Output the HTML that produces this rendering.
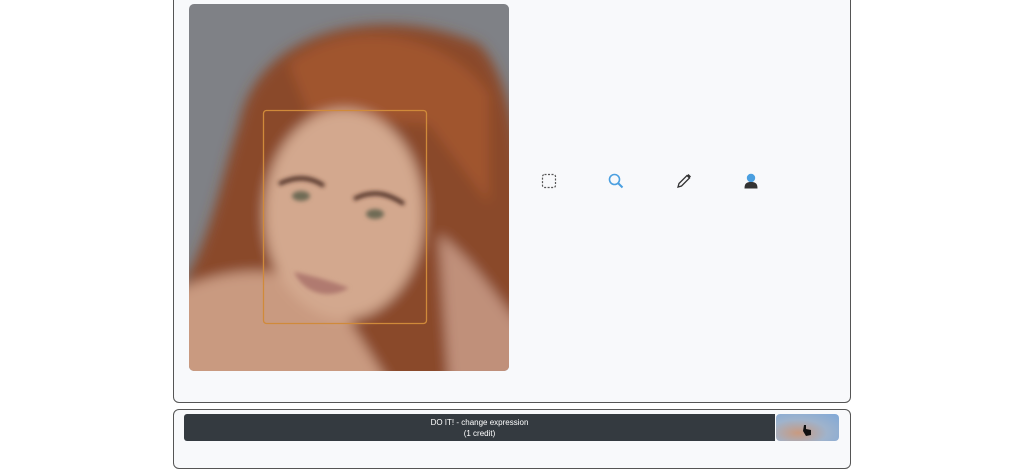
<!DOCTYPE html>
<html><head><style>
html,body{margin:0;padding:0;width:1024px;height:444px;overflow:hidden;background:#fff;font-family:"Liberation Sans",sans-serif}
.p1{position:absolute;left:173px;top:-10px;width:678px;height:413px;border:1.5px solid #555;border-radius:6px;background:#f8f9fb;box-sizing:border-box}
.p2{position:absolute;left:173px;top:409px;width:678px;height:60px;border:1.5px solid #555;border-radius:6px;background:#f8f9fb;box-sizing:border-box}
.btn{position:absolute;left:184px;top:414px;width:591px;height:27px;background:#343a40;color:#fff;font-size:8px;text-align:center;line-height:11px;padding-top:3px;box-sizing:border-box;border-radius:3px 0 0 3px}
.blob{position:absolute;left:776px;top:414px;width:63px;height:27px;border-radius:4px;background:radial-gradient(ellipse at 35% 70%,#c99a80 0%,#9fb3cc 50%,#7fa8d8 100%)}
.photo{position:absolute;left:189px;top:4px;width:320px;height:367px;border-radius:5px;overflow:hidden}
.ic{position:absolute;top:173px}
</style></head><body>
<div class="p1"></div>
<div class="photo">
<svg width="320" height="367" viewBox="0 0 320 367">
<defs>
<filter id="b" x="-20%" y="-20%" width="140%" height="140%"><feGaussianBlur stdDeviation="6"/></filter>
<filter id="b2"><feGaussianBlur stdDeviation="2"/></filter>
</defs>
<rect width="320" height="367" fill="#7f8186"/>
<g filter="url(#b)">
<path d="M50 120 C70 20 200 0 290 40 C330 80 340 200 340 380 L-20 380 L-20 300 C20 250 30 180 50 120Z" fill="#8a4a2c"/>
<path d="M100 60 C160 10 260 30 300 90 L300 200 L240 120 L120 110Z" fill="#a0552f"/>
<path d="M-20 290 C60 250 120 270 150 300 L200 380 L-20 380Z" fill="#c99a80"/>
<ellipse cx="155" cy="210" rx="80" ry="105" fill="#d3a88e"/>
<path d="M250 230 C290 260 310 300 340 330 L340 380 L260 380Z" fill="#c0907a"/>
</g>
<g filter="url(#b2)">
<path d="M90 180 C110 170 125 175 135 182" stroke="#4a2b20" stroke-width="4" fill="none"/>
<path d="M165 195 C185 185 200 190 215 200" stroke="#4a2b20" stroke-width="4" fill="none"/>
<ellipse cx="112" cy="192" rx="9" ry="5" fill="#6e6a55"/>
<ellipse cx="186" cy="210" rx="9" ry="5" fill="#6e6a55"/>
<path d="M105 268 C125 272 145 278 160 284 C140 296 115 290 105 268Z" fill="#b07a70"/>
</g>
<rect x="74.5" y="106.5" width="163" height="213" rx="3" fill="none" stroke="#d08a3a" stroke-width="1.3"/>
</svg>
</div>
<svg class="ic" style="left:541px" width="16" height="16"><rect x="1.5" y="1.5" width="13" height="13" rx="2" fill="none" stroke="#555" stroke-width="1.2" stroke-dasharray="2 1.5"/></svg>
<svg class="ic" style="left:608px" width="16" height="16"><circle cx="6.5" cy="6.5" r="5" fill="none" stroke="#4a9fe0" stroke-width="1.6"/><path d="M10 10 L14.5 14.5" stroke="#4a9fe0" stroke-width="2"/></svg>
<svg class="ic" style="left:676px" width="16" height="16"><path d="M2 14 L3 10.5 L11 2.5 L13.5 5 L5.5 13 Z" fill="none" stroke="#333" stroke-width="1.3"/><path d="M11 2.5 L12.5 1 L15 3.5 L13.5 5Z" fill="#333"/></svg>
<svg class="ic" style="left:743px" width="16" height="16"><circle cx="8" cy="5" r="4.2" fill="#4a9fe0"/><path d="M1.5 15.5 C1.5 10 4 9 8 9 C12 9 14.5 10 14.5 15.5Z" fill="#333"/></svg>
<div class="p2"></div>
<div class="btn">DO IT! - change expression<br>(1 credit)</div>
<div class="blob"></div>
<svg style="position:absolute;left:801px;top:424px" width="12" height="13"><path d="M3 1 L5 1 L5 5 L10 6 L10 11 L5 12 L2 7Z" fill="#111"/></svg>
</body></html>
